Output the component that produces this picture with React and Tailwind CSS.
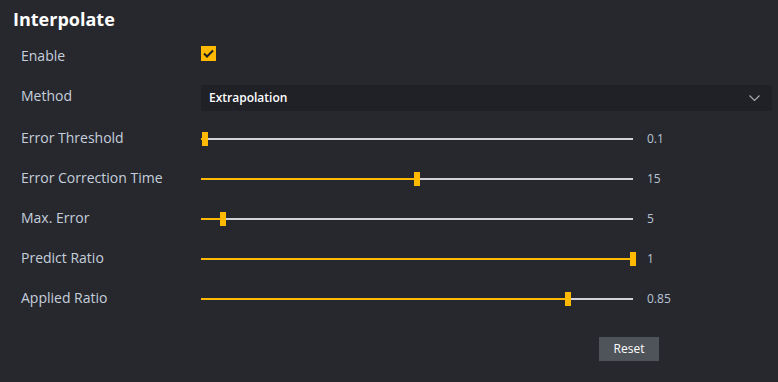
import React, { useState } from 'react'

const sliders = [
    { label: "Error Threshold", value: "0.1", pct: 0 },
    { label: "Error Correction Time", value: "15", pct: 49.5 },
    { label: "Max. Error", value: "5", pct: 4.3 },
    { label: "Predict Ratio", value: "1", pct: 100 },
    { label: "Applied Ratio", value: "0.85", pct: 84.7 },
]

function Slider({ pct }) {
    return (
        <div className="relative w-[432px] h-[14px] flex items-center">
            <div className="w-full h-[2px] bg-[#cfd3d8]"></div>
            <div className="absolute left-0 right-0 top-0 bottom-0 ml-[4px]">
                <div className="absolute top-[6px] h-[2px] bg-[#ffb900] -left-[4px]" style={{ width: `calc(${pct}% + 4px)` }}></div>
                <div className="absolute top-0 w-[6px] h-[14px] bg-[#ffb900] -translate-x-1/2" style={{ left: `${pct}%` }}></div>
            </div>
        </div>
    )
}

export default function App() {
    const [enabled, setEnabled] = useState(true)

    return (
        <div className="w-[778px] h-[382px] bg-[#27282e] overflow-hidden" style={{ fontFamily: '"Open Sans", "Noto Sans", sans-serif' }}>
            <div className="pl-[13px] pt-[7px] h-[33px]">
                <h1 className="text-[18px] leading-[24px] font-bold text-white">Interpolate</h1>
            </div>
            <div className="pl-[21px]">
                <div className="flex items-center h-[40px]">
                    <div className="w-[180px] text-[14px] text-[#c5cfdc] mt-[4px]">Enable</div>
                    <button onClick={() => setEnabled(!enabled)} className="w-[15px] h-[15px] bg-[#ffb900] flex items-center justify-center">
                        {enabled ? (
                            <svg width="11" height="9" viewBox="0 0 11 9" fill="none" stroke="#1d1e22" strokeWidth="2">
                                <polyline points="1,4.5 4,7.5 10,1.5" />
                            </svg>
                        ) : ""}
                    </button>
                </div>
                <div className="flex items-center h-[46px] pt-[4px]">
                    <div className="w-[180px] text-[14px] text-[#c5cfdc] -mt-[6px]">Method</div>
                    <div className="w-[571px] h-[26px] bg-[#202126] flex items-center justify-between pl-[8px] pr-[12px]">
                        <span className="text-[12px] font-semibold text-white">Extrapolation</span>
                        <svg width="11" height="7" viewBox="0 0 11 7" fill="none" stroke="#a9abb0" strokeWidth="1.2">
                            <polyline points="0.5,0.5 5.5,5.5 10.5,0.5" />
                        </svg>
                    </div>
                </div>
                {sliders.map((s) => (
                    <div key={s.label} className="flex items-center h-[40px]">
                        <div className="w-[180px] text-[14px] text-[#c5cfdc] -mt-[4px]">{s.label}</div>
                        <Slider pct={s.pct} />
                        <div className="ml-[14px] text-[12px] text-[#b9c5d5]">{s.value}</div>
                    </div>
                ))}
            </div>
            <div className="w-[659px] flex justify-end mt-[18px]">
                <button className="w-[60px] h-[24px] bg-[#4f535a] text-white text-[12px]">Reset</button>
            </div>
        </div>
    )
}
